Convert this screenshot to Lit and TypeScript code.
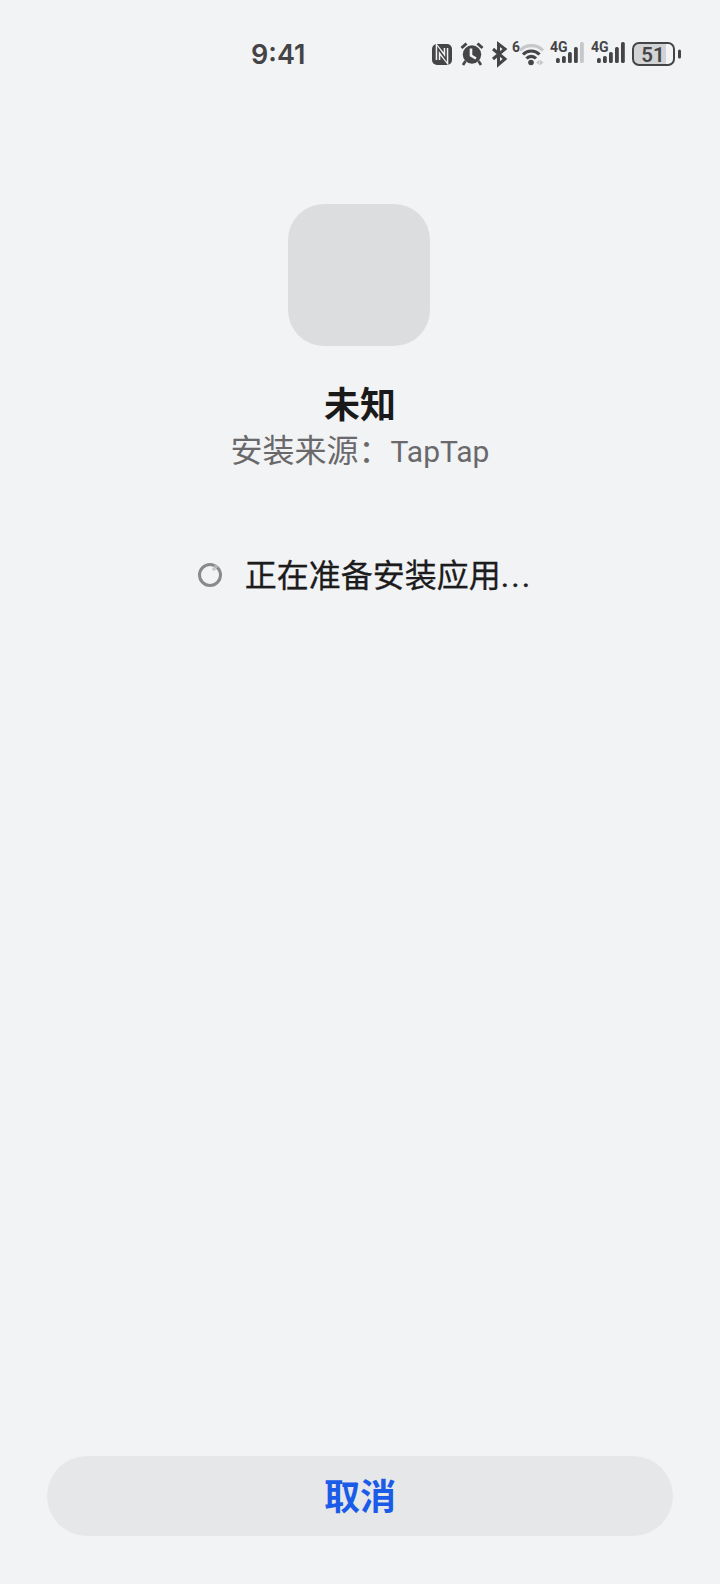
import { LitElement, html, css, svg } from "lit";
import { customElement } from "lit/decorators.js";

const INK = "#454547";
const DIM = "#c6c7c9";
const BG = "#f2f3f5";

@customElement("app-root")
export class AppRoot extends LitElement {
  static styles = css`
    :host {
      display: block;
      width: 720px;
      height: 1584px;
      background: #f2f3f5;
      font-family: "Noto Sans CJK SC", Roboto, sans-serif;
    }
    .page {
      height: 1584px;
      display: flex;
      flex-direction: column;
      align-items: center;
    }
    .status {
      align-self: stretch;
      height: 34px;
      padding: 37px 38px 0 251px;
      display: flex;
      align-items: center;
      justify-content: space-between;
    }
    .time {
      font-family: Inter, Roboto, sans-serif;
      font-size: 27px;
      font-weight: 600;
      color: #444446;
    }
    .icons {
      display: flex;
      align-items: center;
      gap: 5px;
    }
    .icons svg {
      display: block;
      overflow: visible;
    }
    .icons text {
      font-family: Roboto, sans-serif;
    }
    .app-icon {
      width: 142px;
      height: 142px;
      margin-top: 133px;
      margin-right: 2px;
      background: #dcddde;
      border-radius: 36px;
    }
    .name {
      margin-top: 30px;
      font-size: 36px;
      line-height: 52px;
      font-weight: 700;
      color: #1a1a1a;
    }
    .source {
      font-size: 32px;
      line-height: 40px;
      color: #69696b;
      font-family: "Noto Sans CJK SC", sans-serif;
    }
    .latin {
      font-family: Roboto, sans-serif;
      font-size: 30px;
    }
    .progress {
      margin-top: 79px;
      margin-left: 9px;
      display: flex;
      align-items: center;
      gap: 24px;
      font-size: 32px;
      font-weight: 400;
      -webkit-text-stroke: 0.3px #1c1c1c;
      line-height: 44px;
      color: #1c1c1c;
    }
    .dots {
      font-family: Roboto, sans-serif;
      letter-spacing: 2px;
    }
    .spinner {
      width: 26px;
      height: 26px;
      margin-right: -2px;
      display: block;
    }
    .spacer {
      flex: 1;
    }
    .cancel {
      width: 626px;
      height: 80px;
      margin-bottom: 48px;
      padding: 0 0 4px;
      border: none;
      border-radius: 40px;
      background: #e6e7e9;
      color: #1a5ce8;
      font-family: inherit;
      font-size: 36px;
      font-weight: 700;
    }
  `;

  // 5 bars under a small 4G, the last one is dim when signal is not full
  private signal(dim: boolean) {
    const bars = [
      [6, 16, 5],
      [12, 14, 7],
      [18, 10, 11],
      [24, 5, 16],
      [30, 0, 21],
    ];
    return svg`
      <text x="0" y="10" font-size="14" font-weight="700" fill=${INK}>4G</text>
      ${bars.map(
        ([x, y, h], i) => svg`
        <rect x=${x} y=${y} width="3.8" height=${h} rx="1.6"
          fill=${dim && i === 4 ? DIM : INK} />`
      )}
    `;
  }

  render() {
    return html`
      <div class="page">
        <div class="status">
          <span class="time">9:41</span>
          <div class="icons">
            <svg width="23" height="24" viewBox="0 0 23 24">
              <rect x="0" y="2" width="20" height="21" rx="5" fill=${INK} />
              <path d="M6 18V7l8 10V6" fill="none" stroke=${BG} stroke-width="4.6" />
              <path d="M6 19V6.500l8 11V5" fill="none" stroke=${INK} stroke-width="1.6" />
            </svg>
            <svg width="26" height="24" viewBox="0 0 26 24">
              <circle cx="12" cy="12.500" r="9.200" fill=${INK} />
              <path d="M1.500 6l5-4.500M22.500 6l-5-4.500" stroke=${INK} stroke-width="3" fill="none" />
              <path d="M5.500 19l-2.500 4M18.500 19l2.500 4" stroke=${INK} stroke-width="2.600" />
              <path d="M11 6.500v7l5 3" stroke=${BG} stroke-width="2.600" fill="none" />
            </svg>
            <svg width="16" height="24" viewBox="0 0 16 24">
              <path d="M2 7l12 10-6.500 5.500V2L14 7 2 17" fill="none" stroke=${INK} stroke-width="3" />
            </svg>
            <svg width="33" height="24" viewBox="0 0 33 24">
              <text x="0" y="10" font-size="14" font-weight="700" fill=${INK}>6</text>
              <path d="M8 8.500a16 16 0 0 1 23 0" fill="none" stroke=${DIM} stroke-width="3.200" />
              <path d="M11 12.500a11.500 11.500 0 0 1 16.500 0" fill="none" stroke=${INK} stroke-width="3.200" />
              <path d="M14.500 16.500a6.500 6.500 0 0 1 9.500 0" fill="none" stroke=${INK} stroke-width="3.200" />
              <circle cx="19" cy="20.500" r="2.800" fill=${INK} />
              <path d="M24 20.500l3.500-2.800v5.600zM28 17.700l3.500 2.800-3.500 2.800z" fill=${DIM} />
            </svg>
            <svg width="36" height="24" viewBox="0 0 36 24">${this.signal(true)}</svg>
            <svg width="36" height="24" viewBox="0 0 36 24">${this.signal(false)}</svg>
            <svg width="50" height="24" viewBox="0 0 50 24">
              <path d="M4 2h30v20H4a3 3 0 0 1-3-3V5a3 3 0 0 1 3-3z" fill="#d2d3d5" />
              <rect x="1" y="1" width="41" height="22" rx="6" fill="none" stroke=${INK} stroke-width="2" />
              <text x="21" y="19.500" text-anchor="middle" font-size="20.500" font-weight="600" fill=${INK}>51</text>
              <rect x="46" y="7.500" width="3" height="9" rx="1.500" fill=${INK} />
            </svg>
          </div>
        </div>

        <div class="app-icon"></div>
        <div class="name">未知</div>
        <div class="source">安装来源：<span class="latin">TapTap</span></div>

        <div class="progress">
          <svg class="spinner" viewBox="0 0 26 26">
            <circle cx="13" cy="13" r="10.500" fill="none" stroke="#8a8a8c" stroke-width="3" />
            <path d="M17.500 3.500a10.500 10.500 0 0 1 3 2" fill="none" stroke="#b4b4b6" stroke-width="3" />
            <circle cx="17" cy="7" r="1.800" fill="#c4c4c6" />
          </svg>
          <span>正在准备安装应用<span class="dots">...</span></span>
        </div>

        <div class="spacer"></div>
        <button class="cancel">取消</button>
      </div>
    `;
  }
}
